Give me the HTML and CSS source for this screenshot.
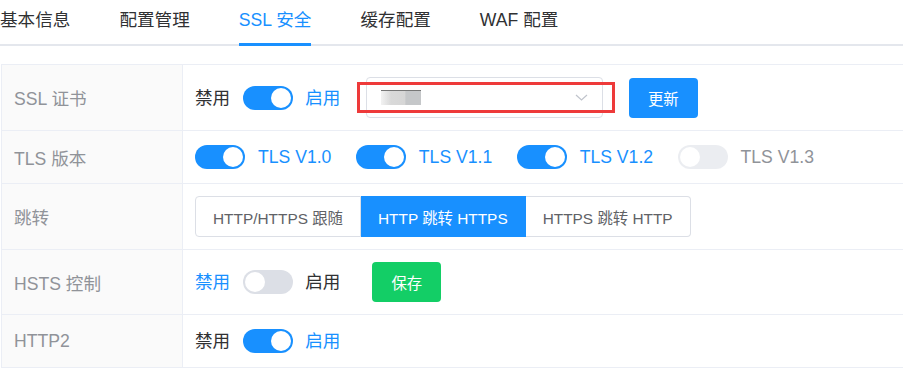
FILE: index.html
```html
<!DOCTYPE html>
<html lang="zh-CN">
<head>
    <meta charset="UTF-8">
    <meta name="viewport" content="width=device-width, initial-scale=1.0">
    <title>站点配置 - SSL 安全</title>
    <link rel="stylesheet" href="styles.css">
</head>
<body>

<!-- Tabs -->
<div class="tabs">
    <div class="tab"><span>基本信息</span></div>
    <div class="tab"><span>配置管理</span></div>
    <div class="tab active"><span>SSL 安全</span></div>
    <div class="tab"><span>缓存配置</span></div>
    <div class="tab"><span>WAF 配置</span></div>
</div>

<!-- SSL settings -->
<div class="config">
    <div class="row">
        <div class="label">SSL 证书</div>
        <div class="value">
            <span>禁用</span>
            <span class="switch on"><span class="knob"></span></span>
            <span class="blue">启用</span>
            <div class="select">
                <span class="blurred"></span>
                <svg class="chevron" width="13" height="7" viewBox="0 0 13 7">
                    <polyline points="1,1 6.5,6 12,1" fill="none" stroke="#c0c4cc" stroke-width="1.2"/>
                </svg>
                <div class="mark"></div>
            </div>
            <button class="btn btn-primary">更新</button>
        </div>
    </div>

    <div class="row">
        <div class="label">TLS 版本</div>
        <div class="value">
            <div class="tls-item">
                <span class="switch on"><span class="knob"></span></span>
                <span class="blue">TLS V1.0</span>
            </div>
            <div class="tls-item">
                <span class="switch on"><span class="knob"></span></span>
                <span class="blue">TLS V1.1</span>
            </div>
            <div class="tls-item">
                <span class="switch on"><span class="knob"></span></span>
                <span class="blue">TLS V1.2</span>
            </div>
            <div class="tls-item">
                <span class="switch disabled"><span class="knob"></span></span>
                <span class="muted">TLS V1.3</span>
            </div>
        </div>
    </div>

    <div class="row">
        <div class="label">跳转</div>
        <div class="value">
            <div class="btn-group">
                <button class="seg">HTTP/HTTPS 跟随</button>
                <button class="seg active">HTTP 跳转 HTTPS</button>
                <button class="seg">HTTPS 跳转 HTTP</button>
            </div>
        </div>
    </div>

    <div class="row">
        <div class="label">HSTS 控制</div>
        <div class="value">
            <span class="blue">禁用</span>
            <span class="switch"><span class="knob"></span></span>
            <span>启用</span>
            <button class="btn btn-success">保存</button>
        </div>
    </div>

    <div class="row">
        <div class="label">HTTP2</div>
        <div class="value">
            <span>禁用</span>
            <span class="switch on"><span class="knob"></span></span>
            <span class="blue">启用</span>
        </div>
    </div>
</div>

</body>
</html>
```

FILE: styles.css
```css
body {
    margin: 0;
    font-family: "Liberation Sans", "Noto Sans CJK SC", sans-serif;
    font-size: 17.6px;
    color: #303133;
    background-color: #fff;
}

/* Tabs */
.tabs {
    display: flex;
    height: 44px;
    border-bottom: 2px solid #e4e7ed;
}
.tab {
    padding: 0 24.5px;
    color: #303133;
}
.tab:first-child {
    padding-left: 0;
}
.tab span {
    display: block;
    height: 43px;
    line-height: 40px;
}
.tab.active span {
    color: #1890ff;
    border-bottom: 3px solid #1890ff;
}

/* Settings table */
.config {
    margin: 18px 0 0 1px;
    width: 930px;
    border: 1px solid #ebeef5;
    border-bottom: none;
}
.row {
    display: flex;
    border-bottom: 1px solid #ebeef5;
}
.label {
    width: 181px;
    box-sizing: border-box;
    padding-left: 12px;
    display: flex;
    align-items: center;
    background-color: #fafafa;
    border-right: 1px solid #ebeef5;
    color: #909399;
}
.value {
    flex: 1;
    display: flex;
    align-items: center;
    padding: 12px;
    min-height: 28px;
    line-height: 28px;
}
.blue {
    color: #1890ff;
}
.muted {
    color: #909399;
}

/* Switch */
.switch {
    display: flex;
    width: 50px;
    height: 24px;
    padding: 2px;
    box-sizing: border-box;
    margin: 0 12.5px;
    border-radius: 12px;
    background-color: #dcdfe6;
}
.switch.on {
    justify-content: flex-end;
    background-color: #1890ff;
}
.switch.disabled {
    opacity: 0.55;
}
.knob {
    width: 20px;
    height: 20px;
    border-radius: 50%;
    background-color: #fff;
}

.tls-item {
    display: flex;
    align-items: center;
    margin-right: 24.5px;
}
.tls-item .switch {
    margin: 0 13px 0 0;
}

/* Select */
.select {
    position: relative;
    width: 237px;
    height: 41px;
    box-sizing: border-box;
    margin-left: 25.5px;
    padding: 0 14px 0 14px;
    display: flex;
    align-items: center;
    justify-content: space-between;
    border: 1px solid #dcdfe6;
    border-radius: 4px;
}
.blurred {
    width: 40px;
    height: 14px;
    background: linear-gradient(90deg, #f2f2f2 0, #d9d9d9 25%, #d6d6d6 60%, #c5c7c9 62%, #c5c7c9 100%);
    border-top: 1px solid #777;
    filter: blur(0.6px);
}
.mark {
    position: absolute;
    left: -10px;
    top: 4px;
    width: 258px;
    height: 31px;
    box-sizing: border-box;
    border: 3px solid #ee3a3a;
}

/* Buttons */
.btn {
    height: 40px;
    padding: 0 19px;
    border: none;
    border-radius: 4px;
    font-family: inherit;
    font-size: 15.4px;
    color: #fff;
    cursor: pointer;
}
.btn-primary {
    margin-left: 26px;
    background-color: #1890ff;
}
.btn-success {
    margin-left: 32px;
    background-color: #13ce66;
}

.btn-group {
    display: flex;
}
.seg {
    height: 41px;
    padding: 0 17px;
    font-family: inherit;
    font-size: 15.4px;
    color: #606266;
    background-color: #fff;
    border: 1px solid #dcdfe6;
    cursor: pointer;
}
.seg + .seg {
    border-left: none;
}
.seg:first-child {
    border-radius: 4px 0 0 4px;
}
.seg:last-child {
    border-radius: 0 4px 4px 0;
}
.seg.active {
    color: #fff;
    background-color: #1890ff;
    border-color: #1890ff;
}
```
